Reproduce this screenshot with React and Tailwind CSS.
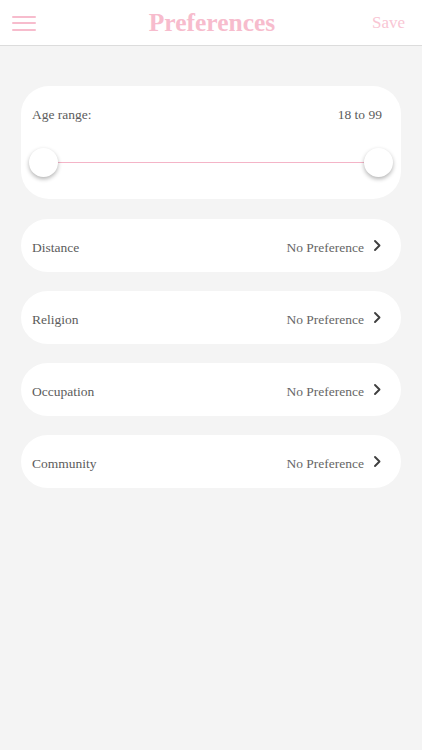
const rows = ['Distance', 'Religion', 'Occupation', 'Community'];

const Chevron = () => (
  <svg width="9" height="13" viewBox="0 0 9 13" className="ml-[9px] mb-[1px]">
    <path d="M2 2 L6.5 6.5 L2 11" fill="none" stroke="#3f3f3f" strokeWidth="1.9" strokeLinecap="round" strokeLinejoin="round" />
  </svg>
);

const Row = ({ label }) => (
  <div className="h-[53px] bg-white rounded-[27px] flex items-center justify-between pl-[11px] pr-[19px]">
    <span className="text-[13.5px] text-[#5c5c5c] mt-[5px]">{label}</span>
    <div className="flex items-center">
      <span className="text-[13.5px] text-[#666] mt-[6px]">No Preference</span>
      <Chevron />
    </div>
  </div>
);

export default function App() {
  return (
    <div className="w-[422px] h-[750px] bg-[#f4f4f4] font-['Liberation_Serif',serif]">
      <header className="h-[46px] bg-white border-b border-[#dcdcdc] flex items-center justify-between px-[12px]">
        <div className="w-[24px] flex flex-col gap-[4.5px] mt-[1px]">
          <span className="h-[2px] bg-[#f7bccd] rounded" />
          <span className="h-[2px] bg-[#f7bccd] rounded" />
          <span className="h-[2px] bg-[#f7bccd] rounded" />
        </div>
        <h1 className="text-[25.5px] font-bold text-[#f7bccd] ml-[16px] mt-[2px]">Preferences</h1>
        <button className="text-[17px] text-[#f9c6d4] mr-[5px] mt-[1px]">Save</button>
      </header>

      <main className="px-[21px] pt-[40px] flex flex-col gap-[19px]">
        <div className="h-[113px] bg-white rounded-[28px] px-[11px] pt-[19px] mb-[1px]">
          <div className="flex justify-between text-[13.5px] leading-[20px] text-[#5c5c5c] pr-[8px]">
            <span>Age range:</span>
            <span>18 to 99</span>
          </div>
          <div className="relative mt-[23px] h-[29px] flex items-center">
            <div className="h-px bg-[#f4b4c7] mx-[22px] flex-1" />
            <span className="absolute left-[-3px] top-0 w-[29px] h-[29px] rounded-full bg-white shadow-[0_2px_4px_rgba(0,0,0,0.3)]" />
            <span className="absolute right-[-3px] top-0 w-[29px] h-[29px] rounded-full bg-white shadow-[0_2px_4px_rgba(0,0,0,0.3)]" />
          </div>
        </div>
        {rows.map(r => <Row key={r} label={r} />)}
      </main>
    </div>
  );
}
